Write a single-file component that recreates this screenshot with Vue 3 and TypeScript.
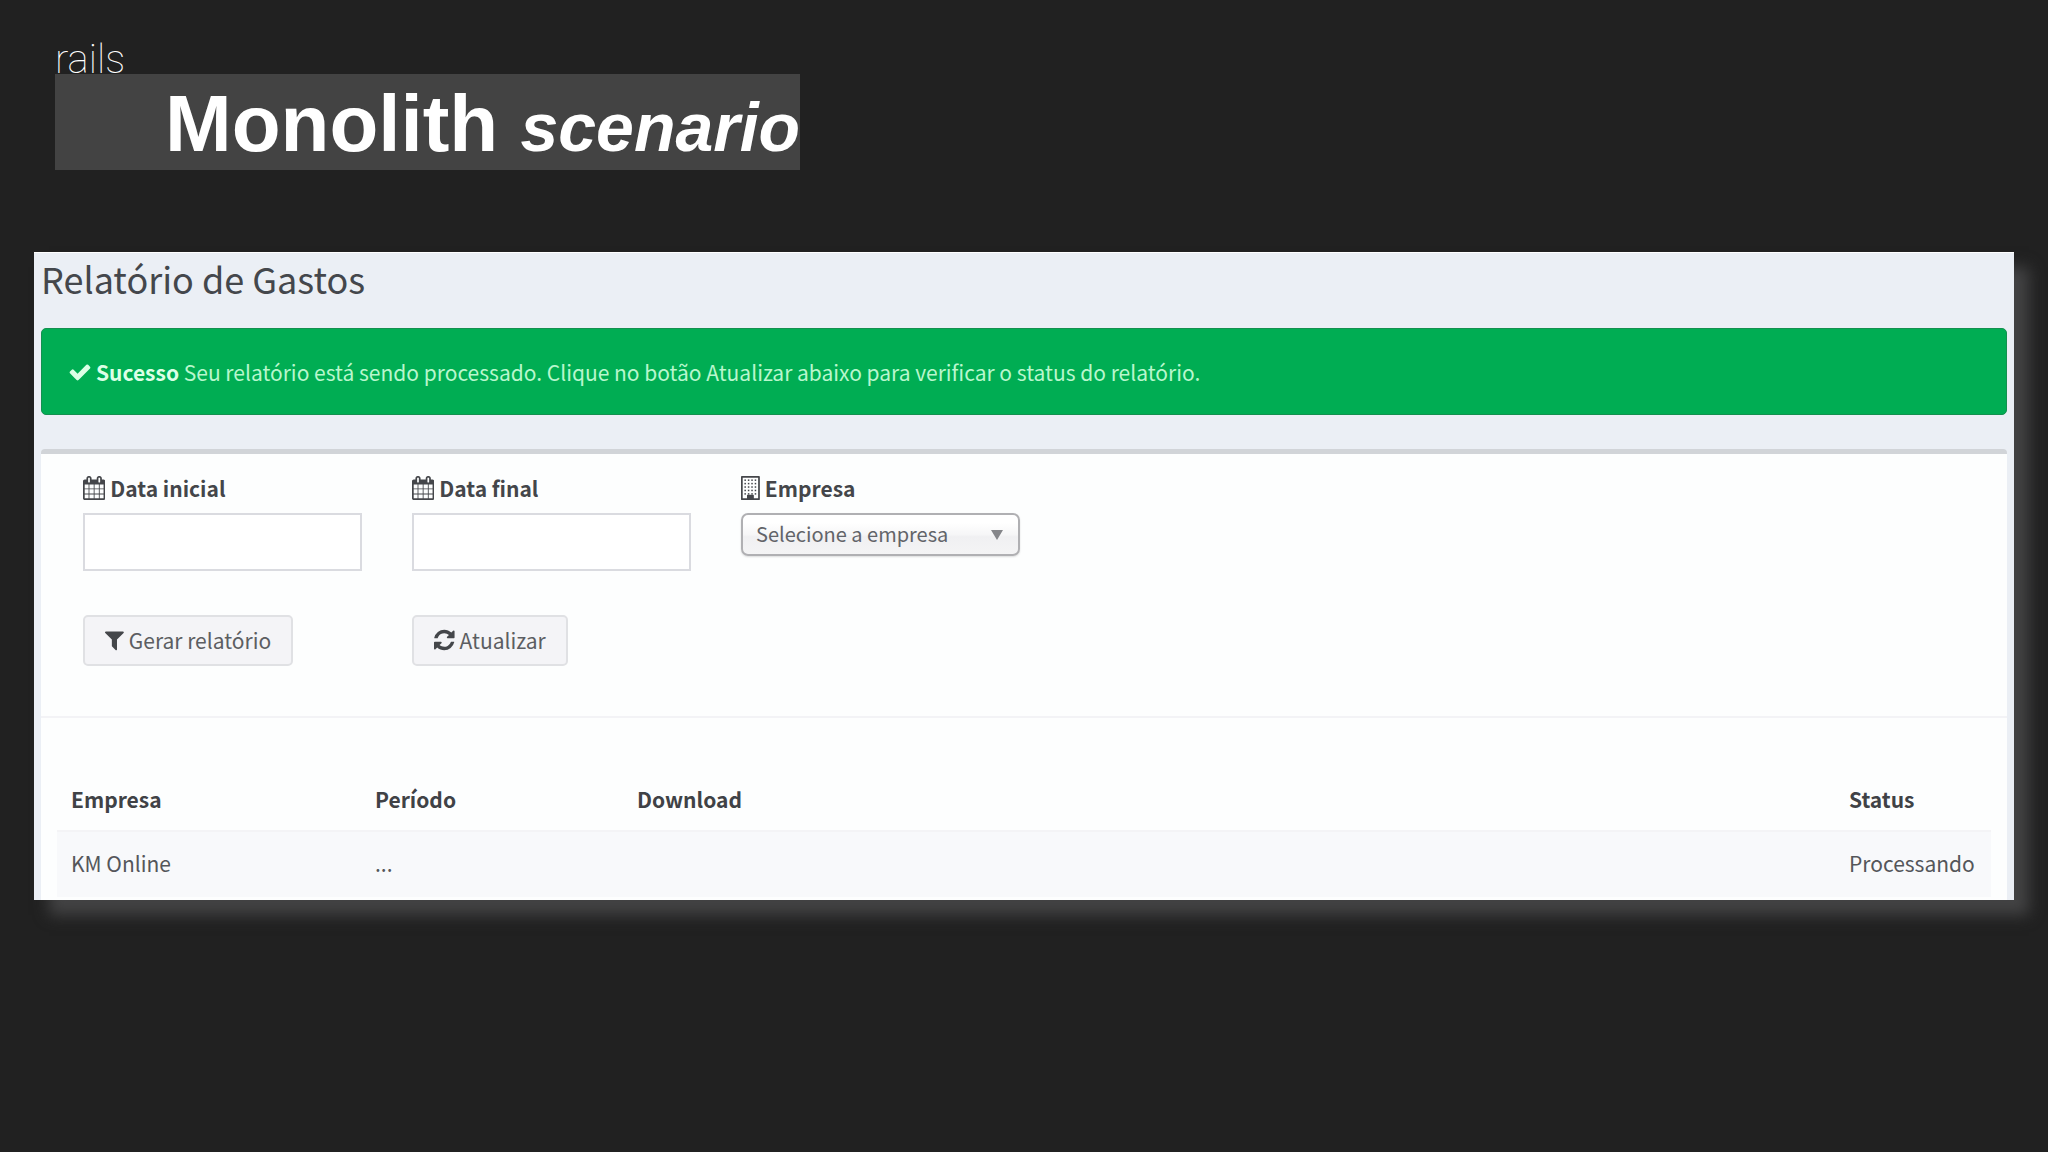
<script setup lang="ts">
import { ref } from 'vue'

interface Report {
  company: string
  period: string
  download: string
  status: string
}

const startDate = ref('')
const endDate = ref('')
const company = ref('')

const reports: Report[] = [
  { company: 'KM Online', period: '...', download: '', status: 'Processando' },
]

const icons = {
  check:
    'M1671 566q0 40-28 68l-724 724-136 136q-28 28-68 28t-68-28l-136-136-362-362q-28-28-28-68t28-68l136-136q28-28 68-28t68 28l294 295 656-657q28-28 68-28t68 28l136 136q28 28 28 68z',
  filter:
    'M1595 295q17 41-14 70l-493 493v742q0 42-39 59-13 5-25 5-27 0-45-19l-256-256q-19-19-19-45v-486l-493-493q-31-29-14-70 17-39 59-39h1280q42 0 59 39z',
  refresh:
    'M1639 1056q0 5-1 7-64 268-268 434.500t-478 166.500q-146 0-282.500-55t-243.500-157l-129 129q-19 19-45 19t-45-19-19-45v-448q0-26 19-45t45-19h448q26 0 45 19t19 45-19 45l-137 137q71 66 161 102t187 36q134 0 250-65t186-179q11-17 53-117 8-23 30-23h192q13 0 22.500 9.500t9.500 22.500zm25-800v448q0 26-19 45t-45 19h-448q-26 0-45-19t-19-45 19-45l138-138q-148-137-349-137-134 0-250 65t-186 179q-11 17-53 117-8 23-30 23h-199q-13 0-22.500-9.500t-9.500-22.500v-7q65-268 270-434.500t480-166.500q146 0 284 55.500t245 156.500l130-129q19-19 45-19t45 19 19 45z',
  calendar:
    'M192 1664h288v-288h-288v288zm352 0h320v-288h-320v288zm-352-352h288v-320h-288v320zm352 0h320v-320h-320v320zm-352-384h288v-288h-288v288zm736 736h320v-288h-320v288zm-384-736h320v-288h-320v288zm768 736h288v-288h-288v288zm-384-352h320v-320h-320v320zm-352-864v-288q0-13-9.500-22.500t-22.500-9.500h-64q-13 0-22.500 9.500t-9.500 22.500v288q0 13 9.500 22.500t22.500 9.500h64q13 0 22.500-9.500t9.500-22.500zm736 864h288v-320h-288v320zm-384-384h320v-288h-320v288zm384 0h288v-288h-288v288zm32-480v-288q0-13-9.500-22.500t-22.500-9.500h-64q-13 0-22.500 9.500t-9.500 22.500v288q0 13 9.500 22.500t22.500 9.500h64q13 0 22.500-9.500t9.500-22.500zm384-64v1280q0 52-38 90t-90 38h-1408q-52 0-90-38t-38-90v-1280q0-52 38-90t90-38h128v-96q0-66 47-113t113-47h64q66 0 113 47t47 113v96h384v-96q0-66 47-113t113-47h64q66 0 113 47t47 113v96h128q52 0 90 38t38 90z',
}

const windowColumns = [256, 512, 768, 1024]
const windowRows = [256, 512, 768, 1024, 1280]
</script>

<template>
  <main class="slide">
    <header class="heading">
      <p class="kicker">rails</p>
      <h1 class="title">Monolith <em>scenario</em></h1>
    </header>

    <section class="panel">
      <h2 class="panel-title">Relatório de Gastos</h2>

      <div class="alert" role="status">
        <svg class="icon" viewBox="0 0 1792 1792" aria-hidden="true"><path :d="icons.check" /></svg>
        <p><strong>Sucesso</strong> Seu relatório está sendo processado. Clique no botão Atualizar abaixo para verificar o status do relatório.</p>
      </div>

      <div class="box">
        <form class="filters" @submit.prevent>
          <div class="field">
            <label class="label" for="start-date">
              <svg class="icon" viewBox="64 0 1664 1792" aria-hidden="true"><path :d="icons.calendar" /></svg>
              Data inicial
            </label>
            <input id="start-date" v-model="startDate" class="input" type="text" />
          </div>
          <div class="field">
            <label class="label" for="end-date">
              <svg class="icon" viewBox="64 0 1664 1792" aria-hidden="true"><path :d="icons.calendar" /></svg>
              Data final
            </label>
            <input id="end-date" v-model="endDate" class="input" type="text" />
          </div>
          <div class="field">
            <label class="label" for="company">
              <svg class="icon" viewBox="0 0 1408 1792" aria-hidden="true">
                <path fill-rule="evenodd" d="M0 64q0-64 64-64h1280q64 0 64 64v1664q0 64-64 64H64q-64 0-64-64zM128 128v1536h320v-224q0-32 32-32h448q32 0 32 32v224h320V128z" />
                <template v-for="y in windowRows" :key="y">
                  <rect v-for="x in windowColumns" :key="x" :x="x" :y="y" width="112" height="112" />
                </template>
              </svg>
              Empresa
            </label>
            <div class="select-wrap">
              <select id="company" v-model="company" class="select">
                <option value="">Selecione a empresa</option>
                <option value="km">KM Online</option>
              </select>
              <svg class="caret" viewBox="0 0 12 10" aria-hidden="true"><path d="M0 0h12L6 10z" /></svg>
            </div>
          </div>
          <div class="action">
            <button class="button" type="submit">
              <svg class="icon" viewBox="192 0 1408 1792" aria-hidden="true"><path :d="icons.filter" /></svg>
              Gerar relatório
            </button>
          </div>
          <div class="action">
            <button class="button" type="button">
              <svg class="icon" viewBox="128 0 1536 1792" aria-hidden="true"><path :d="icons.refresh" /></svg>
              Atualizar
            </button>
          </div>
        </form>

        <div class="results">
          <table class="table">
            <thead>
              <tr>
                <th class="col-company" scope="col">Empresa</th>
                <th class="col-period" scope="col">Período</th>
                <th scope="col">Download</th>
                <th class="col-status" scope="col">Status</th>
              </tr>
            </thead>
            <tbody>
              <tr v-for="report in reports" :key="report.company">
                <td>{{ report.company }}</td>
                <td>{{ report.period }}</td>
                <td>{{ report.download }}</td>
                <td>{{ report.status }}</td>
              </tr>
            </tbody>
          </table>
        </div>
      </div>
    </section>
  </main>
</template>

<style>
body {
  margin: 0;
  background: #212121;
}
</style>

<style scoped>
* {
  box-sizing: border-box;
}

.slide {
  min-height: 100vh;
  padding: 40px 34px;
  background: #212121;
}

.heading {
  padding-left: 21px;
}

.kicker {
  margin: 0;
  height: 34px;
  color: #fff;
  font: 100 40px/40px Roboto, sans-serif;
}

.title {
  width: fit-content;
  margin: 0;
  padding: 4px 0 0 110px;
  background: #434343;
  color: #fff;
  font: bold 80px/92px "Liberation Sans", Arial, sans-serif;
}

.title em {
  font-size: 68px;
  line-height: 1;
}

.panel {
  margin-top: 82px;
  padding: 0 7px;
  border-top: 1px solid #fff;
  background: #ebeff5;
  color: #54565a;
  font: 21px/32px "Noto Sans CJK SC", "Noto Sans", sans-serif;
  box-shadow: 15px 15px 14px #434344;
}

.panel-title {
  margin: 0;
  padding-bottom: 25px;
  color: #44474c;
  font-size: 36px;
  font-weight: 400;
  line-height: 50px;
}

.alert {
  display: flex;
  align-items: center;
  gap: 4px;
  min-height: 87px;
  padding: 0 26px;
  border: 1px solid #14904f;
  border-radius: 5px;
  background: #00ad53;
  color: #b8f7cd;
}

.alert p {
  margin: 0;
}

.alert strong,
.alert .icon {
  color: #dcffe6;
}

.icon {
  flex: none;
  height: 24px;
  fill: currentColor;
}

.box {
  margin-top: 34px;
  border-top: 5px solid #d1d4d8;
  border-radius: 4px 4px 0 0;
  background: #fdfefe;
}

.filters {
  display: grid;
  grid-template-columns: repeat(6, 1fr);
  column-gap: 50px;
  padding: 18px 0 50px 42px;
  border-bottom: 2px solid #f3f3f6;
}

.label {
  display: flex;
  align-items: center;
  gap: 5px;
  margin-bottom: 9px;
  color: #44464a;
  font-weight: 700;
}

.input {
  display: block;
  width: 100%;
  height: 58px;
  padding: 0 16px;
  border: 2px solid #dadbe0;
  background: #fff;
  color: inherit;
  font: inherit;
}

.select-wrap {
  position: relative;
}

.select {
  display: block;
  width: 100%;
  height: 43px;
  padding: 0 40px 2px 13px;
  border: 2px solid #b0b0b3;
  border-radius: 7px;
  background: linear-gradient(#fff 20%, #f6f6f7 50%, #f0f0f2 56%, #f4f4f5 100%);
  box-shadow: 0 1px 2px #0002;
  color: #626469;
  font: inherit;
  font-size: 20px;
  appearance: none;
}

.caret {
  position: absolute;
  top: 17px;
  right: 17px;
  width: 12px;
  height: 10px;
  fill: #85868a;
  pointer-events: none;
}

.action {
  grid-row: 2;
  margin-top: 44px;
}

.button {
  display: flex;
  align-items: center;
  gap: 5px;
  height: 51px;
  padding: 0 20px 2px;
  border: 2px solid #e0e1e4;
  border-radius: 5px;
  background: #f4f4f7;
  color: #5c5e62;
  font: inherit;
}

.button .icon {
  color: #44464a;
}

.results {
  padding: 49px 16px 3px;
}

.table {
  width: 100%;
  border-collapse: collapse;
}

.table th {
  padding: 16px 14px 15px;
  color: #404246;
  text-align: left;
}

.table td {
  padding: 15px 14px 18px;
  border-top: 2px solid #f4f4f6;
  background: #f8f9fb;
}

.col-company {
  width: 304px;
}

.col-period {
  width: 262px;
}

.col-status {
  width: 156px;
}

.table .col-status,
.table td:last-child {
  padding-right: 0;
}
</style>
